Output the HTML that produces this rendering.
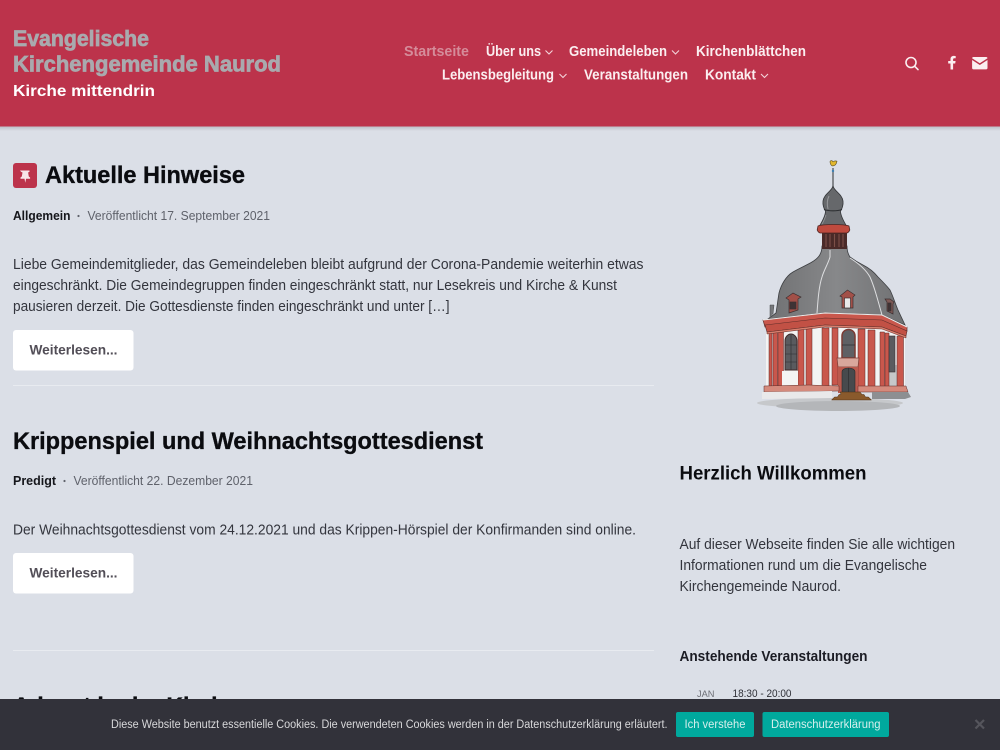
<!DOCTYPE html>
<html lang="de"><head><meta charset="utf-8"><title>Evangelische Kirchengemeinde Naurod</title>
<style>
html,body{margin:0;padding:0;width:1000px;height:750px;overflow:hidden;background:#dbdfe7}
svg{position:absolute;left:0;top:0;display:block}
text{font-family:"Liberation Sans",sans-serif;white-space:pre}
.b{font-weight:700}
.n{font-size:14.5px;font-weight:700;fill:#fbeef0}
.p{font-size:14.5px;fill:#33353d}
.m{font-size:12.5px;fill:#5f626b}
.c{font-size:11.5px;fill:#d8d8da}
.t{stroke:#a9aaae;stroke-width:.7px}
.h{stroke:#0b0c10;stroke-width:.35px}
</style></head><body>
<svg width="1000" height="750" viewBox="0 0 1000 750" xmlns="http://www.w3.org/2000/svg">
<defs>
<linearGradient id="s" x1="0" y1="0" x2="0" y2="1"><stop offset="0" stop-color="#b9bcc4"/><stop offset="1" stop-color="#dbdfe7"/></linearGradient>
<linearGradient id="d" x1="0" y1="0" x2="1" y2="0"><stop offset="0" stop-color="#707173"/><stop offset=".5" stop-color="#87888a"/><stop offset="1" stop-color="#707173"/></linearGradient>
</defs>
<rect width="1000" height="750" fill="#dbdfe7"/>
<rect y="126" width="1000" height="5" fill="url(#s)"/>
<rect width="1000" height="126.500" fill="#bc334b"/>

<text class="b t" x="13" y="46" font-size="22" fill="#a9aaae" textLength="136" lengthAdjust="spacingAndGlyphs">Evangelische</text>
<text class="b t" x="13" y="71.500" font-size="22" fill="#a9aaae" textLength="268" lengthAdjust="spacingAndGlyphs">Kirchengemeinde Naurod</text>
<text class="b" x="13" y="96" font-size="16" fill="#fff" textLength="142" lengthAdjust="spacingAndGlyphs">Kirche mittendrin</text>

<text x="404" y="56" font-size="14.500" font-weight="700" fill="#d58c9a" textLength="65" lengthAdjust="spacingAndGlyphs">Startseite</text>
<text class="n" x="486" y="56" textLength="55" lengthAdjust="spacingAndGlyphs">Über uns</text>
<text class="n" x="569" y="56" textLength="98" lengthAdjust="spacingAndGlyphs">Gemeindeleben</text>
<text class="n" x="696" y="56" textLength="110" lengthAdjust="spacingAndGlyphs">Kirchenblättchen</text>
<text class="n" x="442" y="79.500" textLength="112" lengthAdjust="spacingAndGlyphs">Lebensbegleitung</text>
<text class="n" x="584" y="79.500" textLength="104" lengthAdjust="spacingAndGlyphs">Veranstaltungen</text>
<text class="n" x="705" y="79.500" textLength="51" lengthAdjust="spacingAndGlyphs">Kontakt</text>
<g fill="none" stroke="#f3d5da" stroke-width="1.100">
<path d="M545.500 50.500l3.500 3.500 3.500-3.500"/><path d="M672 50.500l3.500 3.500 3.500-3.500"/>
<path d="M559.500 74l3.500 3.500 3.500-3.500"/><path d="M761 74l3.500 3.500 3.500-3.500"/>
</g>
<g fill="none" stroke="#fbeef0" stroke-width="1.600"><circle cx="911" cy="62.500" r="5"/><path d="M914.600 66.200l3.400 3.400" stroke-linecap="round"/></g>
<path fill="#fbeef0" d="M950.500 69.500v-6h-2.300v-2.500h2.300v-1.800c0-2.200 1.300-3.300 3.200-3.300.9 0 1.700.1 2 .2v2.200h-1.300c-1.100 0-1.300.5-1.300 1.300v1.400h2.500l-.4 2.500h-2.100v6z"/>
<path fill="#fbeef0" d="M973.500 57h12.600c.8 0 1.400.6 1.400 1.300l-7.700 5-7.700-5c0-.7.600-1.300 1.400-1.300z"/>
<path fill="#fbeef0" d="M972.100 60v8c0 .8.600 1.400 1.400 1.400h12.600c.8 0 1.400-.6 1.400-1.400v-8l-7.700 5z"/>

<rect x="13" y="163" width="24" height="25" rx="3" fill="#bc334b"/>
<path fill="#f7e6e9" d="M20 170.500h9.500v1.200l-1.400.8.700 4 1.300 1v1.300h-4l-.8 4-.8-4h-4v-1.300l1.300-1 .7-4-1.500-.8z"/>
<text class="b h" x="45" y="183" font-size="24" fill="#0b0c10" textLength="200" lengthAdjust="spacingAndGlyphs">Aktuelle Hinweise</text>
<text class="b" x="13" y="220" font-size="12.500" fill="#15161b" textLength="57.500" lengthAdjust="spacingAndGlyphs">Allgemein</text>
<circle cx="78.500" cy="216" r="1.100" fill="#5f626b"/>
<text class="m" x="87.500" y="220" textLength="182.500" lengthAdjust="spacingAndGlyphs">Veröffentlicht 17. September 2021</text>

<text class="p" x="13" y="269" textLength="630.500" lengthAdjust="spacingAndGlyphs">Liebe Gemeindemitglieder, das Gemeindeleben bleibt aufgrund der Corona-Pandemie weiterhin etwas</text>
<text class="p" x="13" y="290" textLength="604" lengthAdjust="spacingAndGlyphs">eingeschränkt. Die Gemeindegruppen finden eingeschränkt statt, nur Lesekreis und Kirche &amp; Kunst</text>
<text class="p" x="13" y="311" textLength="436.500" lengthAdjust="spacingAndGlyphs">pausieren derzeit. Die Gottesdienste finden eingeschränkt und unter […]</text>

<rect x="13" y="330" width="120.500" height="40.500" rx="3" fill="#fff"/>
<text class="b" x="29.500" y="354.500" font-size="14" fill="#524e57" textLength="88" lengthAdjust="spacingAndGlyphs">Weiterlesen...</text>
<rect x="13" y="385" width="641" height="1" fill="#e8ebf0"/>

<text class="b h" x="13" y="449" font-size="24" fill="#0b0c10" textLength="470" lengthAdjust="spacingAndGlyphs">Krippenspiel und Weihnachtsgottesdienst</text>
<text class="b" x="13" y="485" font-size="12.500" fill="#15161b" textLength="43" lengthAdjust="spacingAndGlyphs">Predigt</text>
<circle cx="64.500" cy="481" r="1.100" fill="#5f626b"/>
<text class="m" x="73.500" y="485" textLength="179.500" lengthAdjust="spacingAndGlyphs">Veröffentlicht 22. Dezember 2021</text>
<text class="p" x="13" y="534.500" textLength="623" lengthAdjust="spacingAndGlyphs">Der Weihnachtsgottesdienst vom 24.12.2021 und das Krippen-Hörspiel der Konfirmanden sind online.</text>
<rect x="13" y="553" width="120.500" height="40.500" rx="3" fill="#fff"/>
<text class="b" x="29.500" y="577.500" font-size="14" fill="#524e57" textLength="88" lengthAdjust="spacingAndGlyphs">Weiterlesen...</text>
<rect x="13" y="650" width="641" height="1" fill="#e8ebf0"/>
<text class="b h" x="13" y="714" font-size="24" fill="#0b0c10" textLength="225" lengthAdjust="spacingAndGlyphs">Advent in der Kirche</text>

<!-- church -->
<g>
<ellipse cx="830" cy="403" rx="73" ry="5" fill="#c6c8cb"/>
<ellipse cx="838" cy="406" rx="62" ry="5" fill="#b4b6b9"/>
<!-- finial -->
<path d="M833 168v20" stroke="#55585c" stroke-width="1.300"/>
<circle cx="833" cy="171" r="1.200" fill="#3f7fb0"/>
<path fill="#e3b72d" stroke="#5a4f25" stroke-width=".6" d="M830 161.500c.8-1.500 2.500-1.200 3 .3 1-.8 3-1.200 4-.6-.5 2.500-2 4.500-4 4.700-2 .2-3-2.500-3-4.400z"/>
<!-- onion -->
<path fill="#66686b" stroke="#35373a" stroke-width=".8" d="M833 186c1 5 9 8 10 15 .5 4-1 8-2.500 10 0 4 3 10 6 15h-27c3-5 6-11 6-15-1.500-2-3-6-2.500-10 1-7 9-10 10-15z"/>
<path d="M824 209.500c5 1.800 13 1.800 18 0" stroke="#2e3033" stroke-width="1.100" fill="none"/>
<path d="M829 196c-2 4-2 9-1 13" stroke="#98999c" stroke-width="1" fill="none"/>
<path d="M826 215c-1 3-2 6-4 9" stroke="#98999c" stroke-width=".7" fill="none"/>
<!-- dome -->
<path fill="url(#d)" stroke="#3d3f42" stroke-width=".8" d="M822 246h25c0 5 1 8 3 11 4 3 9 6 13 8 6 3 11 7 15 12 5 5 9 9 12 13 3 6 5 13 8 20l7 15-23-10-57-2-57 6 8-6c1-6 2-14 3-20 2-8 7-17 14-21 7-4 14-7 19-10 5-3 10-7 10-16z"/>
<path d="M830 250v7c-2 7-6 13-8 20-3 9-4 22-5 36M850 258c8 5 16 12 20 19 4 9 7 20 12 38" stroke="#dedfe1" stroke-width="1" fill="none"/>
<path d="M770 318v-13h4l-1 9" fill="#77797c" stroke="#46484a" stroke-width=".5"/>
<!-- lantern drum -->
<rect x="822" y="231" width="25" height="18" fill="#4a2a28"/>
<path d="M826 234v13M830 234v13M834.500 234v13M839 234v13M843 234v13" stroke="#7d5048" stroke-width="1.100"/>
<path fill="#bf4a3e" stroke="#4f2522" stroke-width=".8" d="M818 226c5-2 26-2 31 0l.8 4c-.6 1.500-2 3-3 3h-26.600c-1 0-2.400-1.500-3-3z"/>
<!-- dormers -->
<g stroke="#3d3031" stroke-width=".7">
<path fill="#a25048" d="M786 298l7-5 8 4-3 2v11l-9 3v-13z"/>
<rect x="790" y="302" width="6" height="7" fill="#3f3335"/>
<path fill="#a25048" d="M840 296l7.500-6 7.500 5-2 2v11h-11v-11z"/>
<rect x="844.500" y="298" width="6" height="10" fill="#e9e9e9"/>
<path fill="#7e5a56" d="M885 299l5 0 4 3-1 2v10l-6-3v-9z"/>
<rect x="888" y="303" width="3" height="8" fill="#3f3335"/>
</g>
<!-- walls -->
<path fill="#f3f3f3" d="M766 332l59-7 57 2 23 9v51l-139 3z"/>
<path fill="#a9abad" d="M889 365h10v22h-10z" opacity=".6"/>
<!-- columns -->
<g fill="#c9574c" stroke="#5a2b28" stroke-width=".5">
<path d="M769 332h3v56h-3zM773 332h4.500v55h-4.500z"/>
<path d="M778 331h5.500v56h-5.500z"/>
<path d="M798 329h6v57h-6zM806 328h6v58h-6z"/>
<path d="M822 328h7v58h-7zM832 328h6v57h-6z"/>
<path d="M858 329h7v58h-7zM868 330h7v57h-7z"/>
<path d="M880 332h4.500v55h-4.500zM885 333h4v54h-4zM897 336h6.500v52h-6.500z"/>
</g>
<!-- windows -->
<path fill="#5a5b5f" stroke="#402a2a" stroke-width="1" d="M785 370v-29c0-4 3-7 6-7s6 3 6 7v29z"/>
<path d="M791 335v35M785 345h12M785 354h12M785 362h12" stroke="#2d2d30" stroke-width=".6"/>
<rect x="782" y="371" width="16" height="15" fill="#f4f4f4"/>
<path fill="#5f6064" stroke="#7b3a33" stroke-width="1.500" d="M842 358v-22c0-4 3-6.500 6.500-6.500s6.500 2.500 6.500 6.500v22z"/>
<path d="M842 345h13" stroke="#2d2d30" stroke-width=".7"/>
<rect x="889" y="336" width="6" height="36" fill="#5a5b5f" stroke="#3b3032" stroke-width=".6"/>
<path fill="#d9a79c" stroke="#7b3a33" stroke-width=".7" d="M837 358h22l-1 9h-20z"/>
<path fill="#bb5a4e" d="M838 367h20v26h-20z"/>
<path fill="#474a4d" stroke="#2a2b2d" stroke-width=".6" d="M842 393v-21c0-2.500 3-4 6.500-4s6.500 1.500 6.500 4v21z"/>
<path d="M848.500 368v25" stroke="#2a2b2d" stroke-width=".6"/>
<!-- entablature -->
<path fill="#c9574c" stroke="#5f2d29" stroke-width=".7" d="M763 320l62-7 57 2 25 12v4l-25-9-57-2-60 7z"/>
<path fill="#c25145" stroke="#5f2d29" stroke-width=".6" d="M765 325l60-7 57 2 25 11-1 5-24-9-57-2-58 7z"/>
<path fill="#d97f6e" stroke="#5f2d29" stroke-width=".5" d="M767 332l58-7 57 2 24 9v2l-24-9-57-2-58 7z"/>
<path d="M763 320l62-7 57 2 25 12" stroke="#eceded" stroke-width="1" fill="none"/>
<!-- plinth -->
<path fill="#d58a7c" stroke="#5f2d29" stroke-width=".5" d="M764 386l45-1 30 1v5l-75 1zM858 386h48l2 6h-50z"/>
<path fill="#e9e9ea" d="M762 392l70-1v7l-70 1z"/>
<path fill="#8d8f92" d="M872 392h36l3 5-6 2h-33z"/>
<path fill="#8a5a2c" stroke="#4c2f18" stroke-width=".5" d="M840 392h20l2 2.500h2l1.500 2.500h3l3 3h-40l3-3h3l1.500-2.500h2z"/>
</g>

<text class="b" x="679.500" y="479.500" font-size="19.500" fill="#0b0c10" textLength="187" lengthAdjust="spacingAndGlyphs">Herzlich Willkommen</text>
<text class="p" x="679.500" y="549" textLength="275.500" lengthAdjust="spacingAndGlyphs">Auf dieser Webseite finden Sie alle wichtigen</text>
<text class="p" x="679.500" y="570" textLength="247.500" lengthAdjust="spacingAndGlyphs">Informationen rund um die Evangelische</text>
<text class="p" x="679.500" y="591" textLength="161.500" lengthAdjust="spacingAndGlyphs">Kirchengemeinde Naurod.</text>
<text class="b" x="679.500" y="661" font-size="14.500" fill="#1b1c24" textLength="188" lengthAdjust="spacingAndGlyphs">Anstehende Veranstaltungen</text>
<text x="697" y="697" font-size="9.500" fill="#6d6f76" textLength="17.500" lengthAdjust="spacingAndGlyphs">JAN</text>
<text x="732.500" y="697" font-size="11" fill="#2f3037" textLength="59" lengthAdjust="spacingAndGlyphs">18:30 - 20:00</text>

<!-- cookie -->
<rect y="699" width="1000" height="51" fill="#32323a"/>
<text class="c" x="111" y="728" textLength="556.500" lengthAdjust="spacingAndGlyphs">Diese Website benutzt essentielle Cookies. Die verwendeten Cookies werden in der Datenschutzerklärung erläutert.</text>
<rect x="676" y="712" width="78" height="25" rx="2" fill="#00a99d"/>
<text x="684.500" y="728" font-size="11.500" fill="#d6efed" textLength="61" lengthAdjust="spacingAndGlyphs">Ich verstehe</text>
<rect x="762.500" y="712" width="126.500" height="25" rx="2" fill="#00a99d"/>
<text x="771" y="728" font-size="11.500" fill="#d6efed" textLength="109.500" lengthAdjust="spacingAndGlyphs">Datenschutzerklärung</text>
<path d="M975.500 720l8.500 8.500M984 720l-8.500 8.500" stroke="#55555c" stroke-width="2.200"/>
</svg>
</body></html>
